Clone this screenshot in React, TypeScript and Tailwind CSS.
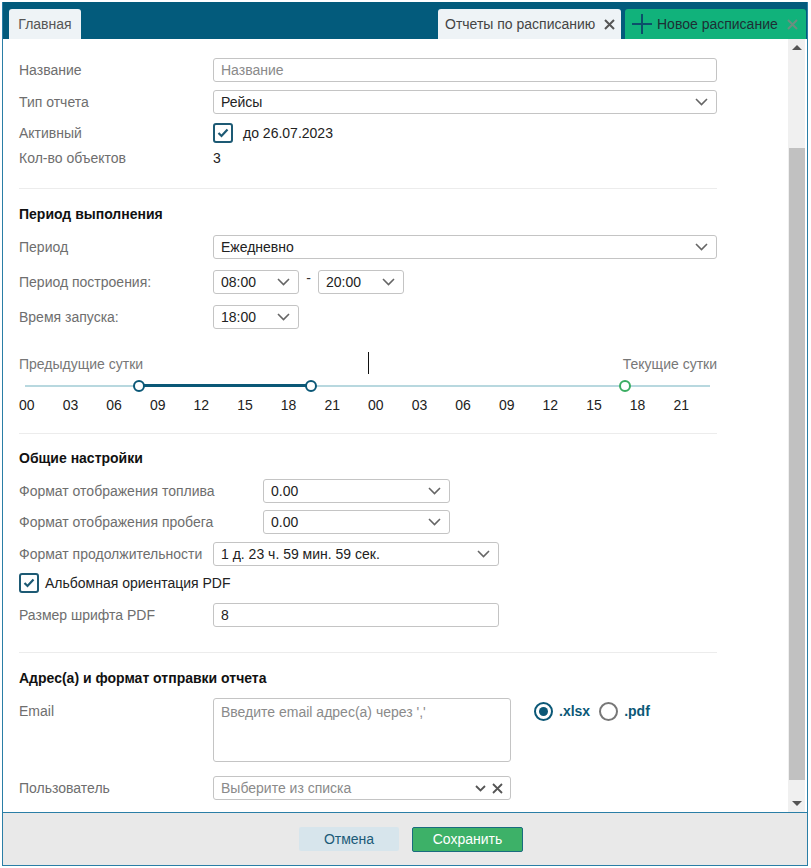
import React from "react";

const Chevron = ({ className = "" }: { className?: string }) => (
  <svg width="13" height="8" viewBox="0 0 13 8" className={className}>
    <polyline points="1,1 6.5,6.5 12,1" fill="none" stroke="#666" strokeWidth="1.6" />
  </svg>
);

const Check = () => (
  <div className="w-[20px] h-[20px] border-2 border-[#1d5a74] rounded-[3px] flex items-center justify-center bg-white">
    <svg width="12" height="10" viewBox="0 0 12 10">
      <polyline points="1.5,5 4.5,8 10.5,1.5" fill="none" stroke="#1d5a74" strokeWidth="2.2" />
    </svg>
  </div>
);

const Select = ({ value, w }: { value: string; w: string }) => (
  <div className={`${w} h-[24px] border border-[#c4c4c4] rounded-[3px] flex items-center justify-between pl-[7px] pr-[8px] bg-white`}>
    <span className="text-[14px] text-[#222]">{value}</span>
    <Chevron />
  </div>
);

const Label = ({ children, w = "w-[194px]" }: { children: React.ReactNode; w?: string }) => (
  <div className={`${w} shrink-0 text-[14px] text-[#6e6e6e]`}>{children}</div>
);

const Divider = ({ mt }: { mt: string }) => <div className={`${mt} h-px bg-[#ececec] w-[698px]`} />;

const hours = ["00", "03", "06", "09", "12", "15", "18", "21", "00", "03", "06", "09", "12", "15", "18", "21"];

export default function App() {
  return (
    <div className="w-[811px] h-[868px] bg-white pt-[2px] pl-[2px] font-['Liberation_Sans',Arial,sans-serif]">
      <div className="w-[806px] h-[864px] border-x border-b border-[#2a7ea6] flex flex-col">
        {/* Header */}
        <div className="h-[37px] bg-[#035b7c] flex items-end justify-between pl-[6px] pr-[1px] shrink-0">
          <div className="h-[30px] w-[72px] bg-[#eef3f6] rounded-t-[3px] flex items-center justify-center text-[14px] text-[#555]">
            Главная
          </div>
          <div className="flex items-end gap-[4px]">
            <div className="h-[30px] w-[183px] bg-[#eef3f6] rounded-t-[3px] flex items-center pl-[7px] pr-[6px] justify-between text-[14px] text-[#444]">
              <span>Отчеты по расписанию</span>
              <svg width="11" height="11" viewBox="0 0 11 11">
                <path d="M1 1 L10 10 M10 1 L1 10" stroke="#555" strokeWidth="2" />
              </svg>
            </div>
            <div className="h-[30px] w-[181px] bg-[#11b27b] rounded-t-[3px] flex items-center pl-[6px] pr-[8px] text-[14px] text-[#1d2f35]">
              <svg width="22" height="22" viewBox="0 0 22 22" className="mr-[4px]">
                <path d="M11 1 V21 M1 11 H21" stroke="#0c4f6a" strokeWidth="2" />
              </svg>
              <span className="flex-1 whitespace-nowrap">Новое расписание</span>
              <svg width="11" height="11" viewBox="0 0 11 11">
                <path d="M1 1 L10 10 M10 1 L1 10" stroke="#6b8f80" strokeWidth="2" />
              </svg>
            </div>
          </div>
        </div>

        {/* Content */}
        <div className="flex-1 flex min-h-0">
          <div className="w-[785px] pl-[16px] pt-[19px] flex flex-col">
            {/* Section 1 */}
            <div className="flex items-center h-[24px]">
              <Label>Название</Label>
              <div className="w-[504px] h-[24px] border border-[#c4c4c4] rounded-[3px] flex items-center pl-[7px] text-[14px] text-[#8a8a8a]">
                Название
              </div>
            </div>
            <div className="flex items-center h-[24px] mt-[8px]">
              <Label>Тип отчета</Label>
              <Select value="Рейсы" w="w-[504px]" />
            </div>
            <div className="flex items-center h-[20px] mt-[9px]">
              <Label>Активный</Label>
              <Check />
              <span className="ml-[10px] text-[14px] text-[#222]">до 26.07.2023</span>
            </div>
            <div className="flex items-center h-[20px] mt-[5px]">
              <Label>Кол-во объектов</Label>
              <span className="text-[14px] text-[#222]">3</span>
            </div>
            <Divider mt="mt-[20px]" />

            {/* Section 2 */}
            <div className="h-[20px] mt-[15px] flex items-center text-[14px] font-bold text-[#111]">Период выполнения</div>
            <div className="flex items-center h-[24px] mt-[11px]">
              <Label>Период</Label>
              <Select value="Ежедневно" w="w-[504px]" />
            </div>
            <div className="flex items-center h-[24px] mt-[11px]">
              <Label>Период построения:</Label>
              <Select value="08:00" w="w-[86px]" />
              <span className="w-[19px] text-center text-[14px] text-[#333] relative top-[-4px]">-</span>
              <Select value="20:00" w="w-[86px]" />
            </div>
            <div className="flex items-center h-[24px] mt-[11px]">
              <Label>Время запуска:</Label>
              <Select value="18:00" w="w-[86px]" />
            </div>

            {/* Timeline */}
            <div className="relative w-[698px] h-[20px] mt-[25px] flex items-center justify-between text-[14px] text-[#777]">
              <span>Предыдущие сутки</span>
              <span>Текущие сутки</span>
              <div className="absolute left-[349px] top-[-2px] w-px h-[22px] bg-[#111]" />
            </div>
            <div className="relative w-[698px] h-[14px] mt-[5px]">
              <div className="absolute left-[6px] w-[685px] top-[6px] h-[2px] bg-[#b8d8df]" />
              <div className="absolute left-[120px] w-[172px] top-[5px] h-[3px] bg-[#0b5877]" />
              <div className="absolute left-[114px] top-[1px] w-[12px] h-[12px] rounded-full border-2 border-[#0b5877] bg-white" />
              <div className="absolute left-[286px] top-[1px] w-[12px] h-[12px] rounded-full border-2 border-[#0b5877] bg-white" />
              <div className="absolute left-[600px] top-[1px] w-[12px] h-[12px] rounded-full border-2 border-[#3aad62] bg-white" />
            </div>
            <div className="w-[698px] h-[16px] mt-[4px] grid grid-cols-16 text-[14px] text-[#222]">
              {hours.map((h, i) => (
                <span key={i} className="leading-[16px]">
                  {h}
                </span>
              ))}
            </div>
            <Divider mt="mt-[20px]" />

            {/* Section 3 */}
            <div className="h-[20px] mt-[14px] flex items-center text-[14px] font-bold text-[#111]">Общие настройки</div>
            <div className="flex items-center h-[24px] mt-[11px]">
              <Label w="w-[244px]">Формат отображения топлива</Label>
              <Select value="0.00" w="w-[187px]" />
            </div>
            <div className="flex items-center h-[24px] mt-[7px]">
              <Label w="w-[244px]">Формат отображения пробега</Label>
              <Select value="0.00" w="w-[187px]" />
            </div>
            <div className="flex items-center h-[24px] mt-[8px]">
              <Label>Формат продолжительности</Label>
              <Select value="1 д. 23 ч. 59 мин. 59 сек." w="w-[286px]" />
            </div>
            <div className="flex items-center h-[20px] mt-[7px]">
              <Check />
              <span className="ml-[6px] text-[14px] text-[#222]">Альбомная ориентация PDF</span>
            </div>
            <div className="flex items-center h-[24px] mt-[10px]">
              <Label>Размер шрифта PDF</Label>
              <div className="w-[286px] h-[24px] border border-[#c4c4c4] rounded-[3px] flex items-center pl-[7px] text-[14px] text-[#222]">
                8
              </div>
            </div>
            <Divider mt="mt-[25px]" />

            {/* Section 4 */}
            <div className="h-[20px] mt-[15px] flex items-center text-[14px] font-bold text-[#111]">
              Адрес(а) и формат отправки отчета
            </div>
            <div className="flex items-start mt-[10px]">
              <Label>
                <span className="block mt-[3px]">Email</span>
              </Label>
              <div className="w-[298px] h-[64px] border border-[#c4c4c4] rounded-[3px] pl-[7px] pt-[3px] text-[14px] text-[#8a8a8a]">
                Введите email адрес(а) через ','
              </div>
              <div className="ml-[23px] mt-[3px] flex items-center">
                <div className="w-[19px] h-[19px] rounded-full border-2 border-[#0b5877] flex items-center justify-center">
                  <div className="w-[9px] h-[9px] rounded-full bg-[#0b5877]" />
                </div>
                <span className="ml-[6px] text-[14px] font-bold text-[#0b5877]">.xlsx</span>
                <div className="ml-[9px] w-[19px] h-[19px] rounded-full border-2 border-[#777]" />
                <span className="ml-[6px] text-[14px] font-bold text-[#0b5877]">.pdf</span>
              </div>
            </div>
            <div className="flex items-center h-[24px] mt-[14px]">
              <Label>Пользователь</Label>
              <div className="w-[298px] h-[24px] border border-[#c4c4c4] rounded-[3px] flex items-center justify-between pl-[7px] pr-[7px] text-[14px] text-[#8a8a8a]">
                <span>Выберите из списка</span>
                <div className="flex items-center gap-[6px]">
                  <svg width="11" height="7" viewBox="0 0 11 7">
                    <polyline points="1,1 5.5,5.5 10,1" fill="none" stroke="#555" strokeWidth="1.8" />
                  </svg>
                  <svg width="11" height="11" viewBox="0 0 11 11">
                    <path d="M1 1 L10 10 M10 1 L1 10" stroke="#555" strokeWidth="1.8" />
                  </svg>
                </div>
              </div>
            </div>
          </div>

          {/* Scrollbar */}
          <div className="w-[17px] bg-[#f0f0f0] flex flex-col items-center">
            <div className="h-[17px] w-full flex items-center justify-center">
              <div className="w-0 h-0 border-l-[5px] border-r-[5px] border-b-[5px] border-l-transparent border-r-transparent border-b-[#555]" />
            </div>
            <div className="mt-[92px] w-[16px] h-[632px] bg-[#c1c1c1]" />
            <div className="mt-auto h-[17px] w-full flex items-center justify-center">
              <div className="w-0 h-0 border-l-[5px] border-r-[5px] border-t-[5px] border-l-transparent border-r-transparent border-t-[#555]" />
            </div>
          </div>
          <div className="w-[2px]" />
        </div>

        {/* Footer */}
        <div className="h-[53px] shrink-0 bg-[#e9e9e9] border-t border-[#2a7ea6] flex items-center justify-center gap-[13px] pl-[12px]">
          <div className="w-[100px] h-[24px] bg-[#d7e5ec] rounded-[2px] flex items-center justify-center text-[14px] text-[#1c5b78]">
            Отмена
          </div>
          <div className="w-[111px] h-[25px] bg-[#3db168] border border-[#1a6b7f] rounded-[2px] flex items-center justify-center text-[14px] text-white">
            Сохранить
          </div>
        </div>
      </div>
    </div>
  );
}
